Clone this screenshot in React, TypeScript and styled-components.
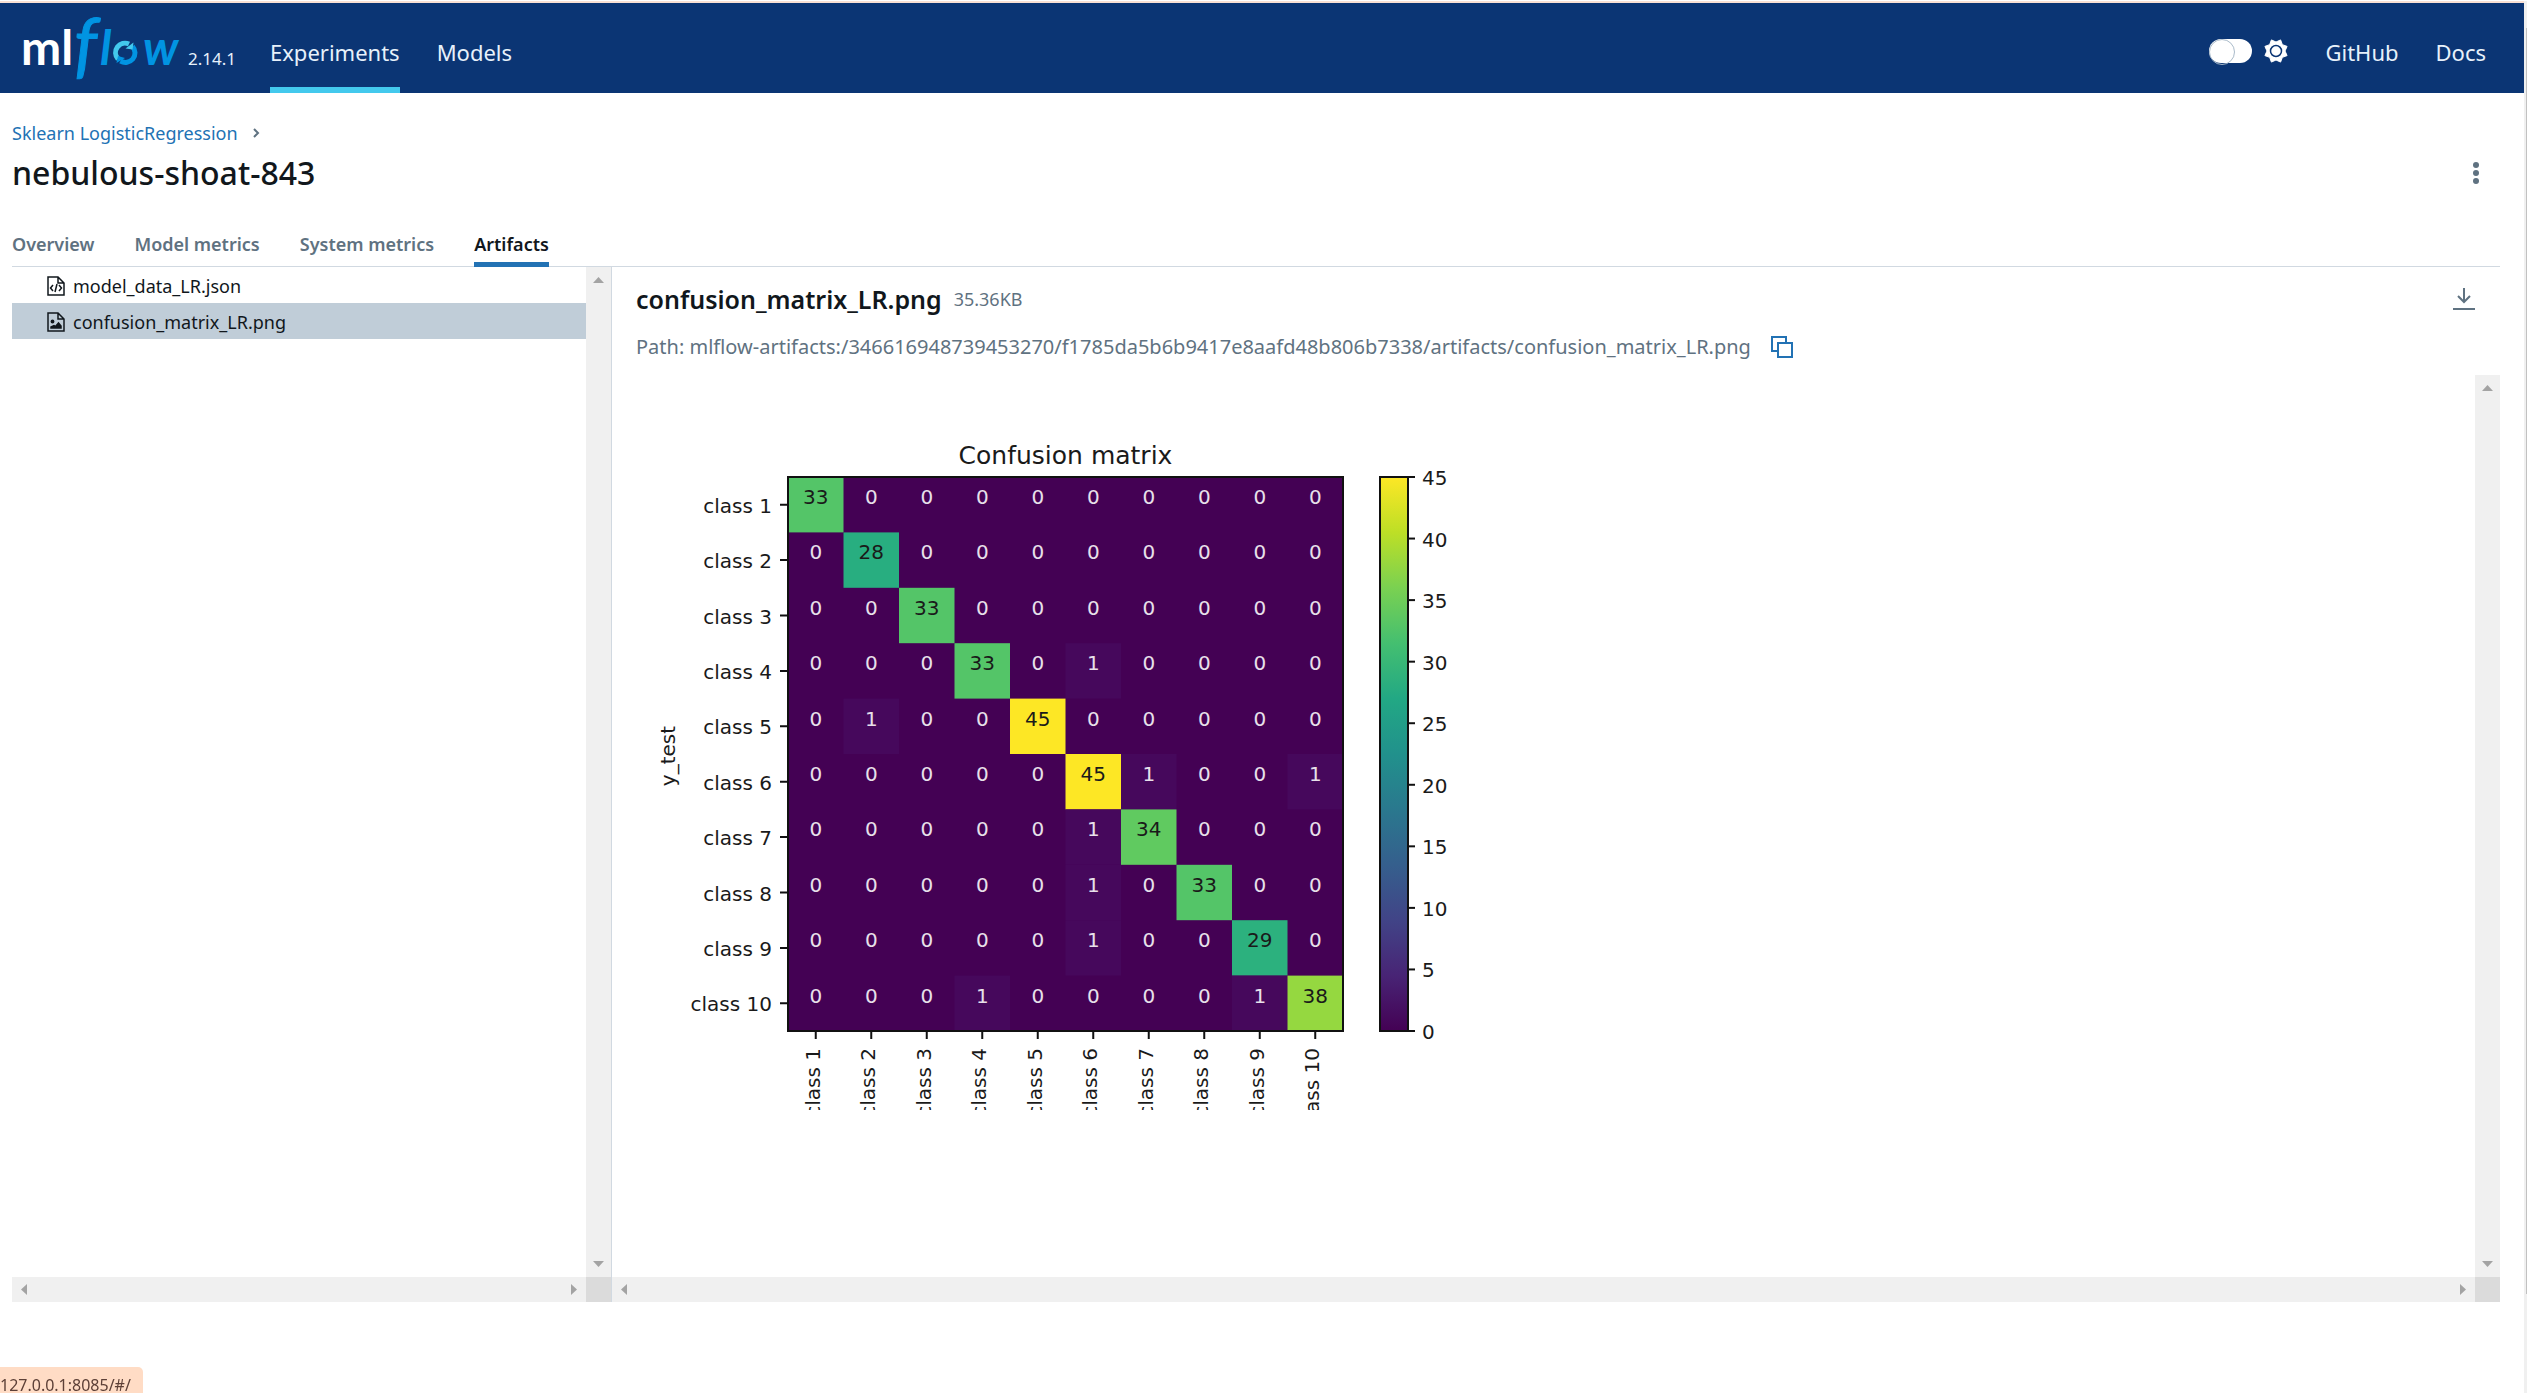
import React from "react";
import styled, { createGlobalStyle, css } from "styled-components";

const Global = createGlobalStyle`
  * { box-sizing: border-box; }
  body {
    margin: 0;
    background: #fff;
    color: #11171c;
    font-family: "Noto Sans", "Open Sans", sans-serif;
    font-size: 18px;
    line-height: 28px;
  }
  button { font: inherit; color: inherit; background: none; border: 0; padding: 0; cursor: pointer; }
  a { color: inherit; text-decoration: none; }
  h1, h2, p, ul { margin: 0; padding: 0; }
  svg { display: block; }
`;

const Shell = styled.div`
  display: flex;
  min-height: 100vh;
  padding-top: 1px;
`;

const Page = styled.div`
  flex: 1;
  min-width: 0;
  display: flex;
  flex-direction: column;
  border-top: 2px solid #f9e0d4;
`;

const WindowTrack = styled.div`
  width: 3px;
  padding: 27px 0 99px 2px;
  background: #f0f0f0;
  display: flex;
`;

const WindowThumb = styled.div`
  flex: 1;
  background: #c1c1c1;
`;

const Header = styled.header`
  display: flex;
  align-items: stretch;
  height: 90px;
  padding: 0 38px 0 22px;
  background: #0b3574;
  color: #e7f1fb;
  font-size: 22px;
`;

const Brand = styled.a`
  display: flex;
  align-items: center;
  width: 166px;
`;

const LogoSvg = styled.svg`
  overflow: visible;
`;

const Version = styled.span`
  width: 82px;
  padding-top: 42px;
  font-size: 17px;
`;

const HeaderNav = styled.nav`
  display: flex;
  gap: 37px;
`;

const HeaderLink = styled.a<{ $active?: boolean }>`
  display: flex;
  align-items: center;
  height: 90px;
  padding-top: 14px;
  border-bottom: 6px solid ${(p) => (p.$active ? "#43c9ed" : "transparent")};
`;

const HeaderSide = styled.div`
  display: flex;
  align-items: center;
  gap: 37px;
  margin-left: auto;
`;

const ThemeSwitch = styled.label`
  display: flex;
  align-items: center;
  gap: 12px;
  padding-top: 6px;
`;

const SwitchInput = styled.input`
  appearance: none;
  margin: 0;
  width: 43px;
  height: 24px;
  border-radius: 12px;
  background: #fff;
  &::before {
    content: "";
    display: block;
    width: 24px;
    height: 24px;
    border-radius: 50%;
    border: 1px solid #a9bac9;
  }
`;

const Content = styled.main`
  flex: 1;
  display: flex;
  flex-direction: column;
  padding: 26px 24px 91px 12px;
`;

const Crumbs = styled.nav`
  display: flex;
  align-items: center;
  gap: 14px;
  color: #5f7281;
  a { color: #2272b4; }
`;

const TitleRow = styled.div`
  display: flex;
  align-items: center;
  justify-content: space-between;
  height: 52px;
  padding-right: 14px;
`;

const RunTitle = styled.h1`
  font-size: 32px;
  font-weight: 500;
`;

const IconButton = styled.button`
  display: flex;
  align-items: center;
  justify-content: center;
  color: #5f7281;
`;

const Tabs = styled.div`
  display: flex;
  gap: 40px;
  margin-top: 22px;
  border-bottom: 1px solid #d1d9e1;
`;

const Tab = styled.button<{ $active?: boolean }>`
  height: 46px;
  margin-bottom: -1px;
  padding-top: 4px;
  font-weight: 600;
  color: #5f7281;
  border-bottom: 5px solid transparent;
  ${(p) =>
    p.$active &&
    css`
      color: #11171c;
      border-color: #2272b4;
    `}
`;

const Workspace = styled.div`
  flex: 1;
  display: flex;
`;

const ScrollPane = styled.div`
  display: grid;
  grid-template-columns: minmax(0, 1fr) 25px;
  grid-template-rows: minmax(0, 1fr) 25px;
`;

const FilePane = styled(ScrollPane)`
  width: 600px;
  border-right: 1px solid #d1d9e1;
`;

const Track = styled.div<{ $vertical?: boolean }>`
  display: flex;
  flex-direction: ${(p) => (p.$vertical ? "column" : "row")};
  justify-content: space-between;
  align-items: center;
  padding: ${(p) => (p.$vertical ? "10px 0" : "0 9px")};
  background: #f0f0f0;
  color: #a3a3a3;
`;

const Corner = styled.div`
  background: #dbdbdb;
`;

const FileList = styled.ul`
  list-style: none;
`;

const FileRow = styled.li<{ $selected?: boolean }>`
  background: ${(p) => (p.$selected ? "#c0cdd8" : "transparent")};
`;

const FileButton = styled.button`
  display: flex;
  align-items: center;
  gap: 8px;
  width: 100%;
  height: 36px;
  padding: 2px 0 0 35px;
`;

const ArtifactPane = styled.section`
  flex: 1;
  min-width: 0;
  display: flex;
  flex-direction: column;
`;

const ArtifactHeader = styled.div`
  height: 108px;
  padding: 12px 24px 0;
`;

const ArtifactTitleRow = styled.div`
  display: flex;
  align-items: center;
  height: 40px;
`;

const ArtifactTitle = styled.h2`
  font-size: 25px;
  font-weight: 600;
`;

const FileSize = styled.span`
  margin-left: 12px;
  color: #5f7281;
`;

const DownloadButton = styled(IconButton)`
  margin-left: auto;
`;

const PathRow = styled.div`
  display: flex;
  align-items: center;
  gap: 20px;
  height: 56px;
  color: #5f7281;
  font-size: 20px;
`;

const CopyButton = styled(IconButton)`
  color: #2272b4;
`;

const Viewer = styled(ScrollPane)`
  flex: 1;
`;

const ViewerBody = styled.div`
  padding: 35px 24px;
`;

const StatusTip = styled.div`
  position: fixed;
  left: 0;
  bottom: 0;
  height: 26px;
  padding: 4px 12px 0 0;
  border-top-right-radius: 5px;
  background: #ffdcc5;
  color: #5d4037;
  font-size: 16px;
  line-height: 28px;
`;

type Dir = "up" | "down" | "left" | "right";
const arrowPaths: Record<Dir, string> = {
  up: "M0 6 5.500 0 11 6z",
  down: "M0 0h11L5.500 6z",
  left: "M6 0v11L0 5.500z",
  right: "M0 0l6 5.500L0 11z",
};
const Arrow = ({ dir }: { dir: Dir }) => {
  const flat = dir === "up" || dir === "down";
  return (
    <svg width={flat ? 11 : 6} height={flat ? 6 : 11} fill="currentColor">
      <path d={arrowPaths[dir]} />
    </svg>
  );
};

const Logo = () => (
  <LogoSvg width="160" height="76" viewBox="0 0 160 76" role="img" aria-label="mlflow">
    <g fontFamily="Lato, sans-serif" fontWeight="700">
      <text x="-1" y="55" fontSize="48" fill="#fff">ml</text>
      <g fill="#0194e2" fontStyle="italic">
        <text x="52" y="60" fontSize="72" fontWeight="400" stroke="#0194e2">f</text>
        <text x="78" y="55" fontSize="48">l</text>
        <text x="121" y="55" fontSize="48">w</text>
      </g>
    </g>
    <g fill="none" strokeWidth="5">
      <path d="M96 49A9.500 9.500 0 0 1 107 34" stroke="#43c9ed" />
      <path d="M110.500 36.500A9.500 9.500 0 0 1 98.500 51" stroke="#0194e2" />
    </g>
    <path d="M111.500 32.500l-1 7-7-1z" fill="#43c9ed" />
    <path d="M94.500 53l1.500-7 7 2z" fill="#0194e2" />
  </LogoSvg>
);

const sunPoints = Array.from({ length: 16 }, (_, i) => {
  const angle = ((i + 1) * Math.PI) / 8;
  const radius = i % 2 ? 9 : 12;
  return `${12 + radius * Math.cos(angle)},${12 + radius * Math.sin(angle)}`;
}).join(" ");

const SunIcon = () => (
  <svg width="24" height="24" viewBox="0 0 24 24">
    <polygon points={sunPoints} fill="#fff" stroke="#fff" strokeLinejoin="round" />
    <circle cx="12" cy="12" r="5.500" fill="#fff" stroke="#0b3574" strokeWidth="1.500" />
  </svg>
);

const FileIcon = ({ kind }: { kind: "code" | "image" }) => (
  <svg width="18" height="20" viewBox="0 0 18 20" fill="none" stroke="#11171c" strokeWidth="1.500">
    <path d="M1 1h10l6 6v12H1zM11 1v6h6" />
    {kind === "code" ? (
      <path d="M6 9l-2.500 3L6 15M12 9l2.500 3L12 15M10 8l-2 8" />
    ) : (
      <>
        <circle cx="5.500" cy="9.500" r="1.200" fill="#11171c" />
        <path d="M4 16v-1l3-1.500 1.500 1 3-3.500 2.500 3v2z" fill="#11171c" />
      </>
    )}
  </svg>
);

const labels = Array.from({ length: 10 }, (_, i) => `class ${i + 1}`);
const matrix = [
  [33, 0, 0, 0, 0, 0, 0, 0, 0, 0],
  [0, 28, 0, 0, 0, 0, 0, 0, 0, 0],
  [0, 0, 33, 0, 0, 0, 0, 0, 0, 0],
  [0, 0, 0, 33, 0, 1, 0, 0, 0, 0],
  [0, 1, 0, 0, 45, 0, 0, 0, 0, 0],
  [0, 0, 0, 0, 0, 45, 1, 0, 0, 1],
  [0, 0, 0, 0, 0, 1, 34, 0, 0, 0],
  [0, 0, 0, 0, 0, 1, 0, 33, 0, 0],
  [0, 0, 0, 0, 0, 1, 0, 0, 29, 0],
  [0, 0, 0, 1, 0, 0, 0, 0, 1, 38],
];
const cellColors: Record<number, string> = {
  0: "#440154",
  1: "#46085c",
  28: "#28ae80",
  29: "#2cb17e",
  33: "#54c568",
  34: "#60ca60",
  38: "#95d840",
  45: "#fde725",
};
const viridis = [
  "#440154", "#482475", "#414487", "#355f8d", "#2a788e", "#21918c",
  "#22a884", "#44bf70", "#7ad151", "#bddf26", "#fde725",
];

const Chart = styled.svg`
  overflow: hidden;
  font-family: "DejaVu Sans", sans-serif;
  font-size: 20px;
  fill: #1a1a1a;
`;

const LEFT = 152;
const TOP = 67;
const WIDTH = 555;
const HEIGHT = 554;
const COL = WIDTH / 10;
const ROW = HEIGHT / 10;

const ConfusionMatrix = () => (
  <Chart width="840" height="700" viewBox="0 0 840 700" role="img" aria-label="Confusion matrix">
    <defs>
      <linearGradient id="viridis" x1="0" y1="1" x2="0" y2="0">
        {viridis.map((c, i) => (
          <stop key={c} offset={i / 10} stopColor={c} />
        ))}
      </linearGradient>
    </defs>
    <text x={LEFT + WIDTH / 2} y="54" textAnchor="middle" fontSize="25">Confusion matrix</text>
    <text transform="translate(39 346) rotate(-90)" textAnchor="middle">y_test</text>
    <rect x={LEFT} y={TOP} width={WIDTH} height={HEIGHT} fill="#440154" />
    {matrix.map((row, r) =>
      row.map((v, c) => (
        <g key={`${r}-${c}`}>
          {v > 0 && (
            <rect x={LEFT + c * COL} y={TOP + r * ROW} width={COL} height={ROW} fill={cellColors[v]} />
          )}
          <text
            x={LEFT + (c + 0.5) * COL}
            y={TOP + r * ROW + 27}
            textAnchor="middle"
            fill={v > 22 ? "#1a1a1a" : "#e8e0ea"}
          >
            {v}
          </text>
        </g>
      ))
    )}
    <rect x={LEFT} y={TOP} width={WIDTH} height={HEIGHT} fill="none" stroke="#111" strokeWidth="2" />
    {labels.map((l, i) => {
      const midX = LEFT + (i + 0.5) * COL;
      const midY = TOP + (i + 0.5) * ROW;
      return (
        <g key={l}>
          <path
            d={`M${LEFT - 8} ${midY}h8M${midX} ${TOP + HEIGHT}v8`}
            stroke="#111"
            strokeWidth="2"
          />
          <text x={LEFT - 16} y={midY + 8} textAnchor="end">{l}</text>
          <text transform={`translate(${midX + 4} ${TOP + HEIGHT + 17}) rotate(-90)`} textAnchor="end">
            {l}
          </text>
        </g>
      );
    })}
    <rect x="744" y={TOP} width="28" height={HEIGHT} fill="url(#viridis)" stroke="#111" strokeWidth="2" />
    {Array.from({ length: 10 }, (_, i) => {
      const y = TOP + HEIGHT - (i * HEIGHT) / 9;
      return (
        <g key={i}>
          <path d={`M772 ${y}h7`} stroke="#111" strokeWidth="2" />
          <text x="786" y={y + 8}>{i * 5}</text>
        </g>
      );
    })}
  </Chart>
);

const tabs = ["Overview", "Model metrics", "System metrics", "Artifacts"];

export default function App() {
  return (
    <>
      <Global />
      <Shell>
        <Page>
          <Header>
            <Brand href="#/"><Logo /></Brand>
            <Version>2.14.1</Version>
            <HeaderNav>
              <HeaderLink href="#/experiments" $active>Experiments</HeaderLink>
              <HeaderLink href="#/models">Models</HeaderLink>
            </HeaderNav>
            <HeaderSide>
              <ThemeSwitch>
                <SwitchInput type="checkbox" role="switch" aria-label="Dark theme" />
                <SunIcon />
              </ThemeSwitch>
              <HeaderLink href="#github">GitHub</HeaderLink>
              <HeaderLink href="#docs">Docs</HeaderLink>
            </HeaderSide>
          </Header>
          <Content>
            <Crumbs aria-label="Breadcrumb">
              <a href="#/experiments/1">Sklearn LogisticRegression</a>
              <svg width="8" height="10" viewBox="0 0 8 10" fill="none" stroke="currentColor" strokeWidth="2">
                <path d="M2 1l4 4-4 4" />
              </svg>
            </Crumbs>
            <TitleRow>
              <RunTitle>nebulous-shoat-843</RunTitle>
              <IconButton aria-label="More actions">
                <svg width="20" height="24" viewBox="0 0 20 24" fill="currentColor">
                  <circle cx="10" cy="4" r="3" />
                  <circle cx="10" cy="12" r="3" />
                  <circle cx="10" cy="20" r="3" />
                </svg>
              </IconButton>
            </TitleRow>
            <Tabs role="tablist">
              {tabs.map((t) => (
                <Tab key={t} role="tab" aria-selected={t === "Artifacts"} $active={t === "Artifacts"}>
                  {t}
                </Tab>
              ))}
            </Tabs>
            <Workspace>
              <FilePane>
                <FileList>
                  <FileRow>
                    <FileButton><FileIcon kind="code" />model_data_LR.json</FileButton>
                  </FileRow>
                  <FileRow $selected>
                    <FileButton><FileIcon kind="image" />confusion_matrix_LR.png</FileButton>
                  </FileRow>
                </FileList>
                <Track $vertical><Arrow dir="up" /><Arrow dir="down" /></Track>
                <Track><Arrow dir="left" /><Arrow dir="right" /></Track>
                <Corner />
              </FilePane>
              <ArtifactPane>
                <ArtifactHeader>
                  <ArtifactTitleRow>
                    <ArtifactTitle>confusion_matrix_LR.png</ArtifactTitle>
                    <FileSize>35.36KB</FileSize>
                    <DownloadButton aria-label="Download artifact">
                      <svg width="24" height="24" viewBox="0 0 24 24" fill="none" stroke="currentColor" strokeWidth="2">
                        <path d="M12 1v14M6 9l6 6 6-6M1 22h22" />
                      </svg>
                    </DownloadButton>
                  </ArtifactTitleRow>
                  <PathRow>
                    <p>Path: mlflow-artifacts:/346616948739453270/f1785da5b6b9417e8aafd48b806b7338/artifacts/confusion_matrix_LR.png</p>
                    <CopyButton aria-label="Copy path">
                      <svg width="22" height="22" viewBox="0 0 22 22" fill="none" stroke="currentColor" strokeWidth="2">
                        <path d="M7 15H1V1h14v6M7 7h14v14H7z" />
                      </svg>
                    </CopyButton>
                  </PathRow>
                </ArtifactHeader>
                <Viewer>
                  <ViewerBody><ConfusionMatrix /></ViewerBody>
                  <Track $vertical><Arrow dir="up" /><Arrow dir="down" /></Track>
                  <Track><Arrow dir="left" /><Arrow dir="right" /></Track>
                  <Corner />
                </Viewer>
              </ArtifactPane>
            </Workspace>
          </Content>
        </Page>
        <WindowTrack><WindowThumb /></WindowTrack>
      </Shell>
      <StatusTip>127.0.0.1:8085/#/</StatusTip>
    </>
  );
}
